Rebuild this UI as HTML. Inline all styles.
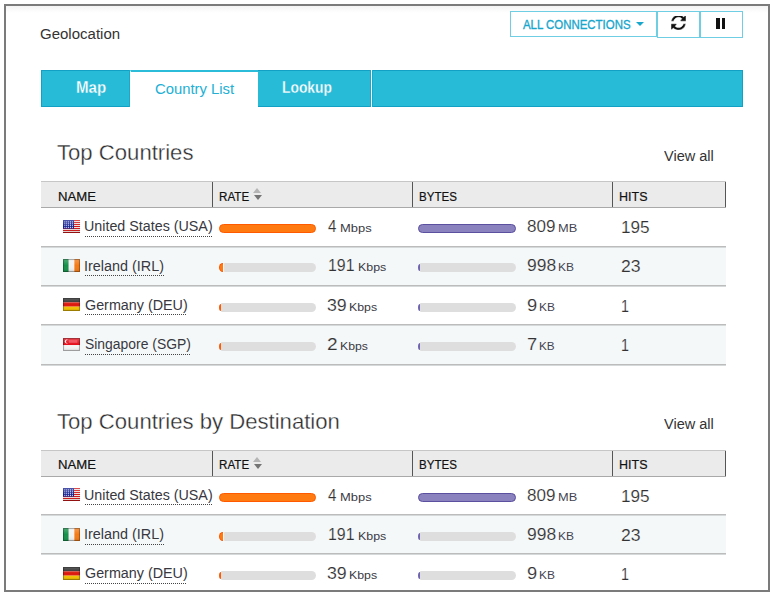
<!DOCTYPE html>
<html><head><meta charset="utf-8"><style>
html,body{margin:0;padding:0;background:#fff;width:777px;height:597px;overflow:hidden}
*{box-sizing:border-box}
body{font-family:"Liberation Sans",sans-serif;color:#333}
.frame{position:absolute;left:4px;top:4px;width:766px;height:588px;border:2px solid #7b7b7b;overflow:hidden;background:#fff}
.inner{position:absolute;left:-6px;top:-6px;width:777px;height:597px}
.inner div, .inner svg{position:absolute}
.t{white-space:nowrap;transform-origin:0 0}
.btn{border:1px solid #6fcde4;background:#fff}
.tabbar{left:41px;top:70px;width:702px;height:37px;background:#28bbd8;border:1px solid #12a0c4}
.thead{left:41px;width:685px;height:27px;background:#ebebeb;border-top:1px solid #c6c6c6;border-bottom:1px solid #a9a9a9}
.vdiv{width:1px;height:25px;background:#555}
.sort{width:10px;height:13px}
.sort:before{content:"";position:absolute;left:0;top:0;border-left:4.5px solid transparent;border-right:4.5px solid transparent;border-bottom:5px solid #b4b4b4}
.sort:after{content:"";position:absolute;left:1px;top:7px;border-left:4.5px solid transparent;border-right:4.5px solid transparent;border-top:5px solid #747474}
.row{left:41px;width:685px}
.rowline{left:41px;width:685px;height:2px;background:#d6d9d9;border-top:1px solid #bcbcbc}
.uline{height:1px;background-image:linear-gradient(to right,#444 50%,transparent 50%);background-size:2px 1px}
.bar{height:9px;border-radius:4.5px}
.orange{background:#ff7a10;border:1px solid #ff5a00}
.purple{background:#8a82be;border:1px solid #5b4fa0}
.track{height:9px;border-radius:1px 4.5px 4.5px 1px;background:#dedede}
.tip{width:4px;height:9px;border-radius:4px 0 0 4px / 4.5px 0 0 4.5px;border-right:none}
.tip0{width:2px;height:7px;border-radius:2px 0 0 2px / 3.5px 0 0 3.5px;border:none}
.tip0.orange{background:#ff5a00}
.tip0.purple{background:#6f64b0}
</style></head><body>
<svg width="0" height="0" style="position:absolute"><defs><linearGradient id="gloss" x1="0" y1="0" x2="0" y2="1"><stop offset="0" stop-color="#fff" stop-opacity=".25"/><stop offset=".5" stop-color="#fff" stop-opacity="0"/><stop offset="1" stop-color="#000" stop-opacity=".1"/></linearGradient></defs></svg>
<div class="frame"><div class="inner">
<div style="left:6px;top:6px;width:764px;height:7px;background:linear-gradient(#f4f4f4,#fff)"></div>
<div class="btn" style="left:510px;top:11px;width:147px;height:26px"></div>
<div style="left:636px;top:22px;width:0;height:0;border-left:4px solid transparent;border-right:4px solid transparent;border-top:4px solid #17a6cc"></div>
<div class="btn" style="left:657px;top:11px;width:43px;height:27px"></div>
<div class="btn" style="left:700px;top:11px;width:43px;height:27px"></div>
<svg style="left:671px;top:15.5px" width="15" height="14.5" viewBox="0 120 1536 1450" preserveAspectRatio="none"><path fill="#111" stroke="#fff" stroke-width="50" d="M1511 928q0 5-1 7-64 268-268 434.5t-478 166.5q-146 0-282.5-55t-243.5-157l-129 129q-19 19-45 19t-45-19-19-45v-448q0-26 19-45t45-19h448q26 0 45 19t19 45-19 45l-137 137q71 66 161 102t187 36q134 0 250-65t186-179q11-17 53-117 8-23 30-23h192q13 0 22.5 9.5t9.5 22.5zm25-800v448q0 26-19 45t-45 19h-448q-26 0-45-19t-19-45 19-45l138-138q-148-137-349-137-134 0-250 65t-186 179q-11 17-53 117-8 23-30 23h-199q-13 0-22.5-9.5t-9.5-22.5v-7q65-268 270-434.5t480-166.5q146 0 284 55.5t245 156.5l130-129q19-19 45-19t45 19 19 45z"/></svg>
<div style="left:716px;top:18px;width:3.5px;height:11px;background:#111"></div>
<div style="left:721.5px;top:18px;width:3.5px;height:11px;background:#111"></div>
<div class="tabbar"></div>
<div style="left:129px;top:70px;width:1px;height:37px;background:#1ca8ca"></div>
<div style="left:130px;top:70px;width:128px;height:38px;background:#fff;border-top:2px solid #2abcd8;border-left:1px solid #fff"></div>
<div style="left:370px;top:70px;width:1px;height:37px;background:#1ca8ca"></div>
<div style="left:371px;top:70px;width:1px;height:37px;background:#fff"></div>
<div style="left:372px;top:70px;width:1px;height:37px;background:#1ca8ca"></div>
<div class="thead" style="top:181.00px"></div>
<div class="vdiv" style="left:212px;top:182.00px"></div>
<div class="vdiv" style="left:412px;top:182.00px"></div>
<div class="vdiv" style="left:612px;top:182.00px"></div>
<div class="vdiv" style="left:725px;top:182.00px"></div>
<div class="sort" style="left:253px;top:188.00px"></div>
<div class="row" style="top:208.00px;height:39.28px;background:#fff"></div>
<svg class="flag" style="left:63px;top:220px" width="17" height="13" viewBox="0 0 17 13" preserveAspectRatio="none"><rect width="17" height="13" fill="#f4f4f4"/><rect x="0" y="0" width="17" height="1.1" fill="#d01818"/><rect x="0" y="2" width="17" height="1.1" fill="#d01818"/><rect x="0" y="4" width="17" height="1.1" fill="#d01818"/><rect x="0" y="6" width="17" height="1.1" fill="#d01818"/><rect x="0" y="8" width="17" height="1.1" fill="#d01818"/><rect x="0" y="10" width="17" height="1.1" fill="#d01818"/><rect x="0" y="12" width="17" height="1.1" fill="#d01818"/><rect x="0" y="12" width="17" height="1" fill="#a01010"/><rect width="11" height="8.7" fill="#14208e"/><rect x="1.30" y="1.40" width="1" height="1" fill="#e8ecff"/><rect x="1.30" y="3.30" width="1" height="1" fill="#e8ecff"/><rect x="1.30" y="5.20" width="1" height="1" fill="#e8ecff"/><rect x="1.30" y="7.10" width="1" height="1" fill="#e8ecff"/><rect x="3.20" y="1.40" width="1" height="1" fill="#e8ecff"/><rect x="3.20" y="3.30" width="1" height="1" fill="#e8ecff"/><rect x="3.20" y="5.20" width="1" height="1" fill="#e8ecff"/><rect x="3.20" y="7.10" width="1" height="1" fill="#e8ecff"/><rect x="5.10" y="1.40" width="1" height="1" fill="#e8ecff"/><rect x="5.10" y="3.30" width="1" height="1" fill="#e8ecff"/><rect x="5.10" y="5.20" width="1" height="1" fill="#e8ecff"/><rect x="5.10" y="7.10" width="1" height="1" fill="#e8ecff"/><rect x="7.00" y="1.40" width="1" height="1" fill="#e8ecff"/><rect x="7.00" y="3.30" width="1" height="1" fill="#e8ecff"/><rect x="7.00" y="5.20" width="1" height="1" fill="#e8ecff"/><rect x="7.00" y="7.10" width="1" height="1" fill="#e8ecff"/><rect x="8.90" y="1.40" width="1" height="1" fill="#e8ecff"/><rect x="8.90" y="3.30" width="1" height="1" fill="#e8ecff"/><rect x="8.90" y="5.20" width="1" height="1" fill="#e8ecff"/><rect x="8.90" y="7.10" width="1" height="1" fill="#e8ecff"/><rect x="0" y="0" width="17" height="13" fill="url(#gloss)"/></svg>
<div class="uline" style="left:85px;top:235.80px;width:127.9px"></div>
<div class="bar orange" style="left:219px;top:224.00px;width:97px"></div>
<div class="bar purple" style="left:418px;top:224.00px;width:98px"></div>
<div class="row" style="top:247.28px;height:39.28px;background:#f5f8f9"></div>
<svg class="flag" style="left:63px;top:259px" width="17" height="13" viewBox="0 0 16 12" preserveAspectRatio="none"><rect width="5.4" height="12" fill="#16924a"/><rect x="5.4" width="5.3" height="12" fill="#f2f2f2"/><rect x="10.7" width="5.3" height="12" fill="#f47b16"/><rect x="0" y="0" width="16" height="12" fill="url(#gloss)"/><rect x="0.5" y="0.5" width="15" height="11" fill="none" stroke="rgba(0,0,0,.3)" stroke-width="1"/></svg>
<div class="uline" style="left:85px;top:275.08px;width:79.0px"></div>
<div class="track" style="left:224px;top:263.28px;width:92px"></div>
<div class="tip orange" style="left:219px;top:263.28px"></div>
<div class="track" style="left:420px;top:263.28px;width:96px"></div>
<div class="tip0 purple" style="left:417.7px;top:264.28px"></div>
<div class="row" style="top:286.56px;height:39.28px;background:#fff"></div>
<svg class="flag" style="left:63px;top:298px" width="17" height="13" viewBox="0 0 16 12" preserveAspectRatio="none"><rect width="16" height="4" fill="#2a2a2a"/><rect y="4" width="16" height="4" fill="#dd1a10"/><rect y="8" width="16" height="4" fill="#f5c400"/><rect x="0" y="0" width="16" height="12" fill="url(#gloss)"/><rect x="0.5" y="0.5" width="15" height="11" fill="none" stroke="rgba(0,0,0,.3)" stroke-width="1"/></svg>
<div class="uline" style="left:85px;top:314.36px;width:102.2px"></div>
<div class="track" style="left:221px;top:302.56px;width:95px"></div>
<div class="tip0 orange" style="left:218.7px;top:303.56px"></div>
<div class="track" style="left:420px;top:302.56px;width:96px"></div>
<div class="tip0 purple" style="left:417.7px;top:303.56px"></div>
<div class="row" style="top:325.84px;height:39.28px;background:#f5f8f9"></div>
<svg class="flag" style="left:63px;top:338px" width="17" height="13" viewBox="0 0 16 12" preserveAspectRatio="none"><rect width="16" height="6.6" fill="#e4101c"/><rect y="6.6" width="16" height="5.4" fill="#f6f6f6"/><circle cx="3.6" cy="3.2" r="1.9" fill="#fff"/><circle cx="4.5" cy="3.2" r="1.7" fill="#e4101c"/><rect x="5.5" y="2" width="8" height="2.5" fill="#f04050"/><rect x="0" y="0" width="16" height="12" fill="url(#gloss)"/><rect x="0.5" y="0.5" width="15" height="11" fill="none" stroke="rgba(0,0,0,.3)" stroke-width="1"/></svg>
<div class="uline" style="left:85px;top:353.64px;width:105.6px"></div>
<div class="track" style="left:221px;top:341.84px;width:95px"></div>
<div class="tip0 orange" style="left:218.7px;top:342.84px"></div>
<div class="track" style="left:420px;top:341.84px;width:96px"></div>
<div class="tip0 purple" style="left:417.7px;top:342.84px"></div>
<div class="rowline" style="top:245.68px"></div>
<div class="rowline" style="top:284.96px"></div>
<div class="rowline" style="top:324.24px"></div>
<div class="rowline" style="top:363.52px"></div>
<div class="thead" style="top:449.50px"></div>
<div class="vdiv" style="left:212px;top:450.50px"></div>
<div class="vdiv" style="left:412px;top:450.50px"></div>
<div class="vdiv" style="left:612px;top:450.50px"></div>
<div class="vdiv" style="left:725px;top:450.50px"></div>
<div class="sort" style="left:253px;top:456.50px"></div>
<div class="row" style="top:476.50px;height:39.28px;background:#fff"></div>
<svg class="flag" style="left:63px;top:488px" width="17" height="13" viewBox="0 0 17 13" preserveAspectRatio="none"><rect width="17" height="13" fill="#f4f4f4"/><rect x="0" y="0" width="17" height="1.1" fill="#d01818"/><rect x="0" y="2" width="17" height="1.1" fill="#d01818"/><rect x="0" y="4" width="17" height="1.1" fill="#d01818"/><rect x="0" y="6" width="17" height="1.1" fill="#d01818"/><rect x="0" y="8" width="17" height="1.1" fill="#d01818"/><rect x="0" y="10" width="17" height="1.1" fill="#d01818"/><rect x="0" y="12" width="17" height="1.1" fill="#d01818"/><rect x="0" y="12" width="17" height="1" fill="#a01010"/><rect width="11" height="8.7" fill="#14208e"/><rect x="1.30" y="1.40" width="1" height="1" fill="#e8ecff"/><rect x="1.30" y="3.30" width="1" height="1" fill="#e8ecff"/><rect x="1.30" y="5.20" width="1" height="1" fill="#e8ecff"/><rect x="1.30" y="7.10" width="1" height="1" fill="#e8ecff"/><rect x="3.20" y="1.40" width="1" height="1" fill="#e8ecff"/><rect x="3.20" y="3.30" width="1" height="1" fill="#e8ecff"/><rect x="3.20" y="5.20" width="1" height="1" fill="#e8ecff"/><rect x="3.20" y="7.10" width="1" height="1" fill="#e8ecff"/><rect x="5.10" y="1.40" width="1" height="1" fill="#e8ecff"/><rect x="5.10" y="3.30" width="1" height="1" fill="#e8ecff"/><rect x="5.10" y="5.20" width="1" height="1" fill="#e8ecff"/><rect x="5.10" y="7.10" width="1" height="1" fill="#e8ecff"/><rect x="7.00" y="1.40" width="1" height="1" fill="#e8ecff"/><rect x="7.00" y="3.30" width="1" height="1" fill="#e8ecff"/><rect x="7.00" y="5.20" width="1" height="1" fill="#e8ecff"/><rect x="7.00" y="7.10" width="1" height="1" fill="#e8ecff"/><rect x="8.90" y="1.40" width="1" height="1" fill="#e8ecff"/><rect x="8.90" y="3.30" width="1" height="1" fill="#e8ecff"/><rect x="8.90" y="5.20" width="1" height="1" fill="#e8ecff"/><rect x="8.90" y="7.10" width="1" height="1" fill="#e8ecff"/><rect x="0" y="0" width="17" height="13" fill="url(#gloss)"/></svg>
<div class="uline" style="left:85px;top:504.30px;width:127.9px"></div>
<div class="bar orange" style="left:219px;top:492.50px;width:97px"></div>
<div class="bar purple" style="left:418px;top:492.50px;width:98px"></div>
<div class="row" style="top:515.78px;height:39.28px;background:#f5f8f9"></div>
<svg class="flag" style="left:63px;top:528px" width="17" height="13" viewBox="0 0 16 12" preserveAspectRatio="none"><rect width="5.4" height="12" fill="#16924a"/><rect x="5.4" width="5.3" height="12" fill="#f2f2f2"/><rect x="10.7" width="5.3" height="12" fill="#f47b16"/><rect x="0" y="0" width="16" height="12" fill="url(#gloss)"/><rect x="0.5" y="0.5" width="15" height="11" fill="none" stroke="rgba(0,0,0,.3)" stroke-width="1"/></svg>
<div class="uline" style="left:85px;top:543.58px;width:79.0px"></div>
<div class="track" style="left:224px;top:531.78px;width:92px"></div>
<div class="tip orange" style="left:219px;top:531.78px"></div>
<div class="track" style="left:420px;top:531.78px;width:96px"></div>
<div class="tip0 purple" style="left:417.7px;top:532.78px"></div>
<div class="row" style="top:555.06px;height:39.28px;background:#fff"></div>
<svg class="flag" style="left:63px;top:567px" width="17" height="13" viewBox="0 0 16 12" preserveAspectRatio="none"><rect width="16" height="4" fill="#2a2a2a"/><rect y="4" width="16" height="4" fill="#dd1a10"/><rect y="8" width="16" height="4" fill="#f5c400"/><rect x="0" y="0" width="16" height="12" fill="url(#gloss)"/><rect x="0.5" y="0.5" width="15" height="11" fill="none" stroke="rgba(0,0,0,.3)" stroke-width="1"/></svg>
<div class="uline" style="left:85px;top:582.86px;width:102.2px"></div>
<div class="track" style="left:221px;top:571.06px;width:95px"></div>
<div class="tip0 orange" style="left:218.7px;top:572.06px"></div>
<div class="track" style="left:420px;top:571.06px;width:96px"></div>
<div class="tip0 purple" style="left:417.7px;top:572.06px"></div>
<div class="rowline" style="top:514.18px"></div>
<div class="rowline" style="top:553.46px"></div>
<div class="rowline" style="top:592.74px"></div>
<div class="t" style="left:40.45px;top:28.00px;font-size:13.91px;line-height:13.91px;font-weight:400;transform:scaleX(1.0789);color:#333">Geolocation</div>
<div class="t" style="left:523.10px;top:19.00px;font-size:12.75px;line-height:12.75px;font-weight:400;transform:scaleX(0.8961);color:#17a6cc;-webkit-text-stroke:0.35px #17a6cc">ALL CONNECTIONS</div>
<div class="t" style="left:75.99px;top:80.00px;font-size:16.00px;line-height:16.00px;font-weight:700;transform:scaleX(0.9445);color:#fff;-webkit-text-stroke:0.3px #2abcd8">Map</div>
<div class="t" style="left:155.06px;top:81.00px;font-size:15.51px;line-height:15.51px;font-weight:400;transform:scaleX(0.9572);color:#22b0d5">Country List</div>
<div class="t" style="left:281.97px;top:80.00px;font-size:15.71px;line-height:15.71px;font-weight:700;transform:scaleX(0.8797);color:#fff;-webkit-text-stroke:0.3px #2abcd8">Lookup</div>
<div class="t" style="left:56.66px;top:142.00px;font-size:22.46px;line-height:22.46px;font-weight:400;transform:scaleX(0.9851);color:#2a2a2a;-webkit-text-stroke:0.35px #fff">Top Countries</div>
<div class="t" style="left:663.80px;top:149.00px;font-size:14.93px;line-height:14.93px;font-weight:400;transform:scaleX(0.9732);color:#333">View all</div>
<div class="t" style="left:58.15px;top:190.00px;font-size:13.33px;line-height:13.33px;font-weight:400;transform:scaleX(0.9877);color:#111;-webkit-text-stroke:0.2px #111">NAME</div>
<div class="t" style="left:218.67px;top:190.00px;font-size:13.33px;line-height:13.33px;font-weight:400;transform:scaleX(0.8727);color:#111;-webkit-text-stroke:0.2px #111">RATE</div>
<div class="t" style="left:419.07px;top:190.00px;font-size:13.33px;line-height:13.33px;font-weight:400;transform:scaleX(0.8684);color:#111;-webkit-text-stroke:0.2px #111">BYTES</div>
<div class="t" style="left:618.50px;top:190.00px;font-size:13.33px;line-height:13.33px;font-weight:400;transform:scaleX(0.9374);color:#111;-webkit-text-stroke:0.2px #111">HITS</div>
<div class="t" style="left:84.40px;top:218.00px;font-size:15.36px;line-height:15.36px;font-weight:400;transform:scaleX(0.9303);color:#383840">United States (USA)</div>
<div class="t" style="left:327.70px;top:219.00px;font-size:16.67px;line-height:16.67px;font-weight:400;transform:scaleX(0.9057);color:#333;-webkit-text-stroke:0.15px #fff">4</div>
<div class="t" style="left:339.77px;top:222.00px;font-size:11.74px;line-height:11.74px;font-weight:400;transform:scaleX(1.1015);color:#3a3a44">Mbps</div>
<div class="t" style="left:527.02px;top:219.00px;font-size:16.67px;line-height:16.67px;font-weight:400;transform:scaleX(1.0236);color:#333;-webkit-text-stroke:0.15px #fff">809</div>
<div class="t" style="left:558.17px;top:223.00px;font-size:10.72px;line-height:10.72px;font-weight:400;transform:scaleX(1.1958);color:#444450">MB</div>
<div class="t" style="left:621.20px;top:220.00px;font-size:16.67px;line-height:16.67px;font-weight:400;transform:scaleX(1.0290);color:#333;-webkit-text-stroke:0.15px #fff">195</div>
<div class="t" style="left:84.10px;top:258.00px;font-size:15.36px;line-height:15.36px;font-weight:400;transform:scaleX(0.9379);color:#383840">Ireland (IRL)</div>
<div class="t" style="left:327.89px;top:258.00px;font-size:16.67px;line-height:16.67px;font-weight:400;transform:scaleX(0.9545);color:#333;-webkit-text-stroke:0.15px #f5f8f9">191</div>
<div class="t" style="left:358.41px;top:261.00px;font-size:11.74px;line-height:11.74px;font-weight:400;transform:scaleX(1.0562);color:#3a3a44">Kbps</div>
<div class="t" style="left:526.50px;top:258.00px;font-size:16.67px;line-height:16.67px;font-weight:400;transform:scaleX(1.0473);color:#333;-webkit-text-stroke:0.15px #f5f8f9">998</div>
<div class="t" style="left:558.14px;top:262.00px;font-size:10.72px;line-height:10.72px;font-weight:400;transform:scaleX(1.1206);color:#444450">KB</div>
<div class="t" style="left:620.52px;top:259.00px;font-size:16.67px;line-height:16.67px;font-weight:400;transform:scaleX(1.0581);color:#333;-webkit-text-stroke:0.15px #f5f8f9">23</div>
<div class="t" style="left:84.68px;top:297.00px;font-size:15.36px;line-height:15.36px;font-weight:400;transform:scaleX(0.9326);color:#383840">Germany (DEU)</div>
<div class="t" style="left:327.07px;top:298.00px;font-size:16.67px;line-height:16.67px;font-weight:400;transform:scaleX(1.0653);color:#333;-webkit-text-stroke:0.15px #fff">39</div>
<div class="t" style="left:349.31px;top:301.00px;font-size:11.74px;line-height:11.74px;font-weight:400;transform:scaleX(1.0523);color:#3a3a44">Kbps</div>
<div class="t" style="left:526.87px;top:298.00px;font-size:16.67px;line-height:16.67px;font-weight:400;transform:scaleX(1.0977);color:#333;-webkit-text-stroke:0.15px #fff">9</div>
<div class="t" style="left:538.85px;top:302.00px;font-size:10.72px;line-height:10.72px;font-weight:400;transform:scaleX(1.1129);color:#444450">KB</div>
<div class="t" style="left:621.30px;top:299.00px;font-size:16.67px;line-height:16.67px;font-weight:400;transform:scaleX(0.8589);color:#333;-webkit-text-stroke:0.15px #fff">1</div>
<div class="t" style="left:84.84px;top:336.00px;font-size:15.36px;line-height:15.36px;font-weight:400;transform:scaleX(0.9054);color:#383840">Singapore (SGP)</div>
<div class="t" style="left:326.64px;top:337.00px;font-size:16.67px;line-height:16.67px;font-weight:400;transform:scaleX(1.1476);color:#333;-webkit-text-stroke:0.15px #f5f8f9">2</div>
<div class="t" style="left:339.92px;top:340.00px;font-size:11.74px;line-height:11.74px;font-weight:400;transform:scaleX(1.0445);color:#3a3a44">Kbps</div>
<div class="t" style="left:526.69px;top:337.00px;font-size:16.67px;line-height:16.67px;font-weight:400;transform:scaleX(1.0954);color:#333;-webkit-text-stroke:0.15px #f5f8f9">7</div>
<div class="t" style="left:539.06px;top:341.00px;font-size:10.72px;line-height:10.72px;font-weight:400;transform:scaleX(1.0975);color:#444450">KB</div>
<div class="t" style="left:621.30px;top:338.00px;font-size:16.67px;line-height:16.67px;font-weight:400;transform:scaleX(0.8589);color:#333;-webkit-text-stroke:0.15px #f5f8f9">1</div>
<div class="t" style="left:56.66px;top:411.00px;font-size:22.46px;line-height:22.46px;font-weight:400;transform:scaleX(0.9855);color:#2a2a2a;-webkit-text-stroke:0.35px #fff">Top Countries by Destination</div>
<div class="t" style="left:663.80px;top:417.00px;font-size:14.93px;line-height:14.93px;font-weight:400;transform:scaleX(0.9732);color:#333">View all</div>
<div class="t" style="left:58.15px;top:458.00px;font-size:13.33px;line-height:13.33px;font-weight:400;transform:scaleX(0.9877);color:#111;-webkit-text-stroke:0.2px #111">NAME</div>
<div class="t" style="left:218.67px;top:458.00px;font-size:13.33px;line-height:13.33px;font-weight:400;transform:scaleX(0.8727);color:#111;-webkit-text-stroke:0.2px #111">RATE</div>
<div class="t" style="left:419.07px;top:458.00px;font-size:13.33px;line-height:13.33px;font-weight:400;transform:scaleX(0.8684);color:#111;-webkit-text-stroke:0.2px #111">BYTES</div>
<div class="t" style="left:618.50px;top:458.00px;font-size:13.33px;line-height:13.33px;font-weight:400;transform:scaleX(0.9374);color:#111;-webkit-text-stroke:0.2px #111">HITS</div>
<div class="t" style="left:84.40px;top:487.00px;font-size:15.36px;line-height:15.36px;font-weight:400;transform:scaleX(0.9303);color:#383840">United States (USA)</div>
<div class="t" style="left:327.70px;top:488.00px;font-size:16.67px;line-height:16.67px;font-weight:400;transform:scaleX(0.9057);color:#333;-webkit-text-stroke:0.15px #fff">4</div>
<div class="t" style="left:339.77px;top:491.00px;font-size:11.74px;line-height:11.74px;font-weight:400;transform:scaleX(1.1015);color:#3a3a44">Mbps</div>
<div class="t" style="left:527.02px;top:488.00px;font-size:16.67px;line-height:16.67px;font-weight:400;transform:scaleX(1.0236);color:#333;-webkit-text-stroke:0.15px #fff">809</div>
<div class="t" style="left:558.17px;top:492.00px;font-size:10.72px;line-height:10.72px;font-weight:400;transform:scaleX(1.1958);color:#444450">MB</div>
<div class="t" style="left:621.20px;top:489.00px;font-size:16.67px;line-height:16.67px;font-weight:400;transform:scaleX(1.0290);color:#333;-webkit-text-stroke:0.15px #fff">195</div>
<div class="t" style="left:84.10px;top:526.00px;font-size:15.36px;line-height:15.36px;font-weight:400;transform:scaleX(0.9379);color:#383840">Ireland (IRL)</div>
<div class="t" style="left:327.89px;top:527.00px;font-size:16.67px;line-height:16.67px;font-weight:400;transform:scaleX(0.9545);color:#333;-webkit-text-stroke:0.15px #f5f8f9">191</div>
<div class="t" style="left:358.41px;top:530.00px;font-size:11.74px;line-height:11.74px;font-weight:400;transform:scaleX(1.0562);color:#3a3a44">Kbps</div>
<div class="t" style="left:526.50px;top:527.00px;font-size:16.67px;line-height:16.67px;font-weight:400;transform:scaleX(1.0473);color:#333;-webkit-text-stroke:0.15px #f5f8f9">998</div>
<div class="t" style="left:558.14px;top:531.00px;font-size:10.72px;line-height:10.72px;font-weight:400;transform:scaleX(1.1206);color:#444450">KB</div>
<div class="t" style="left:620.52px;top:528.00px;font-size:16.67px;line-height:16.67px;font-weight:400;transform:scaleX(1.0581);color:#333;-webkit-text-stroke:0.15px #f5f8f9">23</div>
<div class="t" style="left:84.68px;top:565.00px;font-size:15.36px;line-height:15.36px;font-weight:400;transform:scaleX(0.9326);color:#383840">Germany (DEU)</div>
<div class="t" style="left:327.07px;top:566.00px;font-size:16.67px;line-height:16.67px;font-weight:400;transform:scaleX(1.0653);color:#333;-webkit-text-stroke:0.15px #fff">39</div>
<div class="t" style="left:349.31px;top:569.00px;font-size:11.74px;line-height:11.74px;font-weight:400;transform:scaleX(1.0523);color:#3a3a44">Kbps</div>
<div class="t" style="left:526.87px;top:566.00px;font-size:16.67px;line-height:16.67px;font-weight:400;transform:scaleX(1.0977);color:#333;-webkit-text-stroke:0.15px #fff">9</div>
<div class="t" style="left:538.85px;top:570.00px;font-size:10.72px;line-height:10.72px;font-weight:400;transform:scaleX(1.1129);color:#444450">KB</div>
<div class="t" style="left:621.30px;top:567.00px;font-size:16.67px;line-height:16.67px;font-weight:400;transform:scaleX(0.8589);color:#333;-webkit-text-stroke:0.15px #fff">1</div>
</div></div>
</body></html>
